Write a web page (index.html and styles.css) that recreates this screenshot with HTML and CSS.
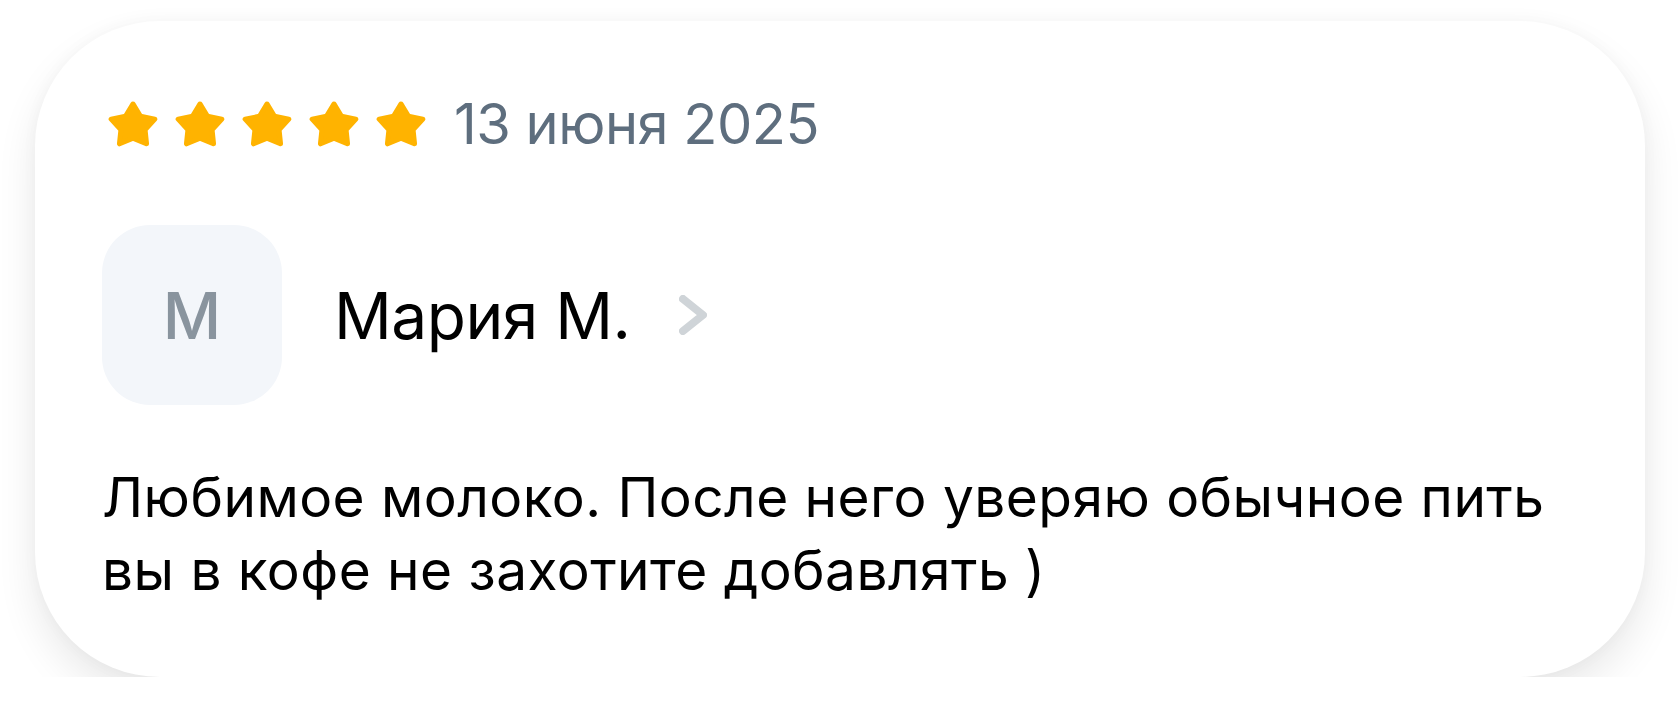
FILE: index.html
```html
<!DOCTYPE html>
<html lang="ru">
<head>
<meta charset="utf-8">
<title>Отзыв</title>
<link rel="stylesheet" href="styles.css">
</head>
<body>
<div class="card">
  <div class="rating">
    <div class="stars">
      <svg class="star" viewBox="0 0 50 46" preserveAspectRatio="none"><polygon points="25,3 32.11,15.21 45.92,18.2 36.51,28.74 37.93,42.8 25,37.1 12.07,42.8 13.49,28.74 4.08,18.2 17.89,15.21"/></svg>
      <svg class="star" viewBox="0 0 50 46" preserveAspectRatio="none"><polygon points="25,3 32.11,15.21 45.92,18.2 36.51,28.74 37.93,42.8 25,37.1 12.07,42.8 13.49,28.74 4.08,18.2 17.89,15.21"/></svg>
      <svg class="star" viewBox="0 0 50 46" preserveAspectRatio="none"><polygon points="25,3 32.11,15.21 45.92,18.2 36.51,28.74 37.93,42.8 25,37.1 12.07,42.8 13.49,28.74 4.08,18.2 17.89,15.21"/></svg>
      <svg class="star" viewBox="0 0 50 46" preserveAspectRatio="none"><polygon points="25,3 32.11,15.21 45.92,18.2 36.51,28.74 37.93,42.8 25,37.1 12.07,42.8 13.49,28.74 4.08,18.2 17.89,15.21"/></svg>
      <svg class="star" viewBox="0 0 50 46" preserveAspectRatio="none"><polygon points="25,3 32.11,15.21 45.92,18.2 36.51,28.74 37.93,42.8 25,37.1 12.07,42.8 13.49,28.74 4.08,18.2 17.89,15.21"/></svg>
    </div>
    <span class="date">13 июня 2025</span>
  </div>
  <div class="author">
    <div class="avatar">М</div>
    <span class="name">Мария М.</span>
    <svg class="chevron" viewBox="0 0 28 40"><path d="M4 4 L24 20 L4 36"/></svg>
  </div>
  <p class="text">Любимое молоко. После него уверяю обычное пить<br>вы в кофе не захотите добавлять )</p>
</div>
</body>
</html>
```
FILE: styles.css
```css
html, body {
  margin: 0;
  padding: 0;
  background: #ffffff;
}
body {
  padding: 21px 35px 0;
}
.card {
  box-sizing: border-box;
  width: 1610px;
  height: 656px;
  background: #ffffff;
  border-radius: 125px;
  box-shadow: 0 20px 40px rgba(0, 0, 0, 0.09), 0 0 16px rgba(0, 0, 0, 0.03);
  padding: 80px 67px 0;
}
.rating {
  display: flex;
  align-items: center;
  height: 46px;
}
.stars {
  display: flex;
  gap: 15px;
  margin-left: 5px;
}
.star {
  width: 52px;
  height: 46px;
  display: block;
}
.star polygon {
  fill: #FFB300;
  stroke: #FFB300;
  stroke-width: 5;
  stroke-linejoin: round;
}
.date {
  margin-left: 27px;
  font-family: Inter, "Noto Sans", sans-serif;
  font-size: 56px;
  line-height: 46px;
  color: #5e6e7e;
  letter-spacing: -0.5px;
}
.author {
  display: flex;
  align-items: center;
  margin-top: 78px;
}
.avatar {
  width: 180px;
  height: 180px;
  border-radius: 48px;
  background: #f3f6fa;
  display: flex;
  align-items: center;
  justify-content: center;
  font-family: Inter, "Noto Sans", sans-serif;
  font-weight: 500;
  font-size: 64px;
  color: #89949e;
}
.name {
  margin-left: 52px;
  font-family: Inter, "Noto Sans", sans-serif;
  font-size: 64px;
  letter-spacing: -0.5px;
  color: #000000;
}
.chevron {
  width: 28px;
  height: 40px;
  margin-left: 48px;
}
.chevron path {
  fill: none;
  stroke: #cfd4d8;
  stroke-width: 8;
  stroke-linecap: round;
  stroke-linejoin: round;
}
.text {
  margin: 56px 0 0;
  font-family: Inter, "Noto Sans", sans-serif;
  font-size: 55px;
  line-height: 73px;
  letter-spacing: 0.45px;
  color: #000000;
}
```
